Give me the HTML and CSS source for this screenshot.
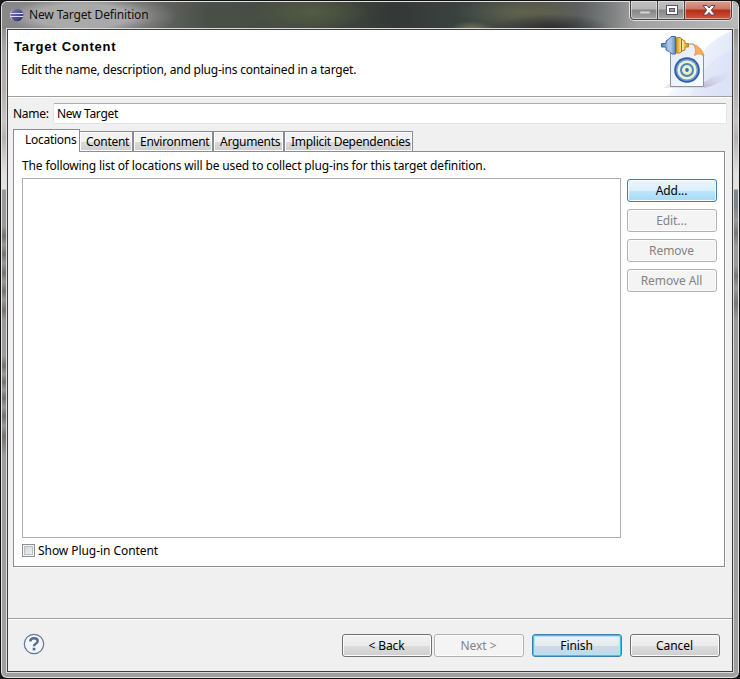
FILE: index.html
```html
<!DOCTYPE html>
<html lang="en">
<head>
<meta charset="utf-8">
<title>New Target Definition</title>
<link rel="stylesheet" href="styles.css">
</head>
<body>
<div class="window">
  <div class="titlebar">
    <svg class="app-icon" width="15" height="14" viewBox="0 0 15 14">
      <defs><linearGradient id="orb" x1="0" y1="0" x2="1" y2="1"><stop offset="0" stop-color="#8581bd"/><stop offset="1" stop-color="#2b2474"/></linearGradient></defs>
      <path d="M5 1 A6.5 6.5 0 0 0 5 13 L4 7Z" fill="#c9b9c8"/>
      <circle cx="8" cy="7" r="6.3" fill="url(#orb)"/>
      <path d="M1 5.5H14M1 8.5H14" stroke="#d7e2fa" stroke-width="1.2"/>
    </svg>
    <span class="title">New Target Definition</span>
    <div class="controls">
      <div class="control min"><svg width="28" height="18"><rect x="9.5" y="10.500" width="9" height="2" fill="#d4d4d4" stroke="#b3b3b3"/></svg></div>
      <div class="control max"><svg width="27" height="18"><rect x="8.500" y="4.500" width="11" height="9" fill="#fff" stroke="#55556a"/><rect x="11.500" y="7.500" width="5" height="3" fill="#999" stroke="#55556a"/></svg></div>
      <div class="control close"><svg width="46" height="18"><path d="M18 4.500h4l2 2.500L26 4.500h4l-3.700 4.700L30 14h-4l-2-2.600-2 2.600h-4l3.700-4.800Z" fill="#fff" stroke="#57485a"/></svg></div>
    </div>
  </div>
  <div class="client">
    <header class="banner">
      <div>
        <h1>Target Content</h1>
        <p>Edit the name, description, and plug-ins contained in a target.</p>
      </div>
      <svg class="banner-art" width="76" height="66" viewBox="0 0 76 66">
        <defs>
          <linearGradient id="wave" x1="0" y1="0" x2="1" y2=".4"><stop offset=".15" stop-color="#fff"/><stop offset="1" stop-color="#dfe6f8"/></linearGradient>
          <linearGradient id="shade" x1="0" y1="1" x2="1" y2="0"><stop offset="0" stop-color="#b5abc8" stop-opacity=".75"/><stop offset="1" stop-color="#ddd9ed" stop-opacity="0"/></linearGradient>
          <linearGradient id="page" x1="0" y1="0" x2="1" y2="1"><stop offset="0" stop-color="#dce7f8"/><stop offset="1" stop-color="#fff"/></linearGradient>
          <linearGradient id="blue" x1="0" y1="0" x2="1" y2="0"><stop offset="0" stop-color="#4f7fbd"/><stop offset=".6" stop-color="#bcd6f2"/><stop offset="1" stop-color="#5586c4"/></linearGradient>
          <linearGradient id="gold" x1="0" y1="0" x2="1" y2="0"><stop offset="0" stop-color="#d49a21"/><stop offset=".45" stop-color="#fff0a5"/><stop offset="1" stop-color="#c58b1b"/></linearGradient>
        </defs>
        <path d="M76 1Q48 12 42 32L10 66H76Z" fill="url(#wave)"/>
        <path d="M76 21Q49 28 34 66H76Z" fill="#d6dff6" opacity=".3"/>
        <path d="M48 58V52Q60 43 76 42Q67 54 48 58Z" fill="url(#shade)"/>
        <path d="M8 58H50L43 53H14Z" fill="#c8bfd0" opacity=".4"/>
        <path d="M14.500 18V56.500H47.500V26L37 14H20Z" fill="url(#page)" stroke="#82979d"/>
        <path d="M37 14Q46 17 48 26Q43 22 38.500 25.500Q41 19 37 14Z" fill="#f8ad5c" stroke="#d88a40" stroke-width=".7"/>
        <circle cx="31" cy="40" r="12.800" fill="#315ca8"/>
        <circle cx="31" cy="40" r="11" fill="#6f9bd0"/>
        <circle cx="31" cy="40" r="9.600" fill="#edf3d0"/>
        <circle cx="31" cy="40" r="6" fill="#e3edc4" stroke="#4c84bd" stroke-width="2"/>
        <circle cx="31" cy="40" r="3.300" fill="#f1f4cf"/>
        <circle cx="31" cy="40" r="1.900" fill="#3c6dad"/>
        <path d="M5.500 13.500H10V11L13 9 15 6.500H19.500V24H16L13 21.500 10 20V17H5.500Z" fill="url(#blue)" stroke="#416caa"/>
        <path d="M14 9V22" stroke="#9cbde1"/>
        <path d="M20.500 7.500H24L27 10 29 11V13.500H32.500V17H29V20L26 21 24 23H20.500Z" fill="url(#gold)" stroke="#bd841c"/>
        <path d="M25.500 9V22" stroke="#9e6b17"/>
      </svg>
    </header>
    <div class="body">
      <div class="name-row"><label for="name">Name:</label><div class="input" id="name"><span>New Target</span></div></div>
      <div class="tabs">
        <div class="tab active t-loc"><span>Locations</span></div>
        <div class="tab t-con"><span>Content</span></div>
        <div class="tab t-env"><span>Environment</span></div>
        <div class="tab t-arg"><span>Arguments</span></div>
        <div class="tab t-imp"><span>Implicit Dependencies</span></div>
      </div>
      <section class="panel">
        <p class="intro">The following list of locations will be used to collect plug-ins for this target definition.</p>
        <div class="content">
          <div class="list"></div>
          <div class="actions">
            <div class="button add"><span>Add...</span></div>
            <div class="button disabled"><span>Edit...</span></div>
            <div class="button disabled"><span>Remove</span></div>
            <div class="button disabled"><span>Remove All</span></div>
          </div>
        </div>
        <div class="check"><i class="box"></i><span>Show Plug-in Content</span></div>
      </section>
    </div>
    <footer class="footer">
      <svg class="help" width="22" height="22" viewBox="0 0 22 22"><circle cx="11" cy="11" r="9.700" fill="#f4f5f7" stroke="#637796" stroke-width="1.200"/><path d="M7.300 8.500Q7.300 5.200 11 5.200T14.700 8.200Q14.700 9.700 12.700 10.800Q11 11.700 11 13.300" fill="none" stroke="#566b8d" stroke-width="2.400"/><rect x="9.700" y="14.800" width="2.700" height="2.600" fill="#566b8d"/></svg>
      <div class="button back"><span>&lt; Back</span></div>
      <div class="button disabled next"><span>Next &gt;</span></div>
      <div class="button finish"><span>Finish</span></div>
      <div class="button cancel"><span>Cancel</span></div>
    </footer>
  </div>
</div>
</body>
</html>
```
FILE: styles.css
```css
* { box-sizing: border-box; }
body { margin: 0; background: #19191b; font: 12px/16px "Noto Sans", "Open Sans", sans-serif; color: #000; overflow: hidden; }
h1, p { margin: 0; }
span { white-space: nowrap; }
svg { display: block; }
.window {
  width: 740px; height: 679px; padding: 0 6px 6px 5px; border: 1px solid #111; border-radius: 7px;
  box-shadow: inset 0 0 0 1px #e4e4e4;
  background:
    linear-gradient(transparent 225px, #777170 235px, #999 244px, #777170 253px, #999 262px, #777170 272px, #999 281px, #777170 290px, #999 299px, #777170 309px, transparent 320px, transparent 355px, #777170 365px, #999 373px, #777170 381px, #999 389px, #777170 397px, #999 406px, #777170 415px, #999 425px, #777170 435px, transparent 455px) 0 0 / 10px 100% no-repeat,
    linear-gradient(transparent 188px, #7d8891 190px, #77828c 205px, #999 220px, #777 232px, #999 245px, #999 265px, #777 275px, #999 287px, #777 302px, transparent 320px) 100% 0 / 10px 100% no-repeat,
    linear-gradient(180deg, #777 0, #aaa 50px, #b5b0af 90px, #c9c4c4 120px, #b5b1b1 137px, #e0dedc 170px, #e6e4e2 188px, #999 189px, #a0a0a0 100%);
}
.titlebar {
  height: 27px; margin: 1px -5px 0 -4px; padding-left: 7px; display: flex; align-items: flex-start; border-radius: 6px 6px 0 0;
  background:
    radial-gradient(ellipse 95px 24px at 80px 14px, rgba(172,172,172,.95) 50%, rgba(140,140,140,.6) 76%, transparent 100%),
    radial-gradient(ellipse 60px 18px at 310px 10px, rgba(92,103,70,.6), transparent),
    radial-gradient(ellipse 60px 14px at 550px 26px, rgba(35,36,38,.8), transparent),
    radial-gradient(ellipse 70px 16px at 520px 10px, rgba(112,113,82,.6), transparent),
    radial-gradient(ellipse 22px 8px at 470px 27px, rgba(160,145,105,.6), transparent),
    linear-gradient(90deg, #858585 0, #656763 150px, #4a4f48 205px, #434a3f 320px, #343837 390px, #3b4442 470px, #50514a 540px, #5a5d5f 575px, #7e8181 610px, #a2a2a2 635px, #b9b9b9 100%);
}
.app-icon { margin-top: 6px; }
.title { margin: 5px 0 0 5px; width: 121px; color: #111; letter-spacing: -.14px; }
.controls { display: flex; margin-left: auto; margin-right: 5px; height: 20px; margin-top: -1px; border: 1px solid #e0e0e0; border-top: 0; border-radius: 0 0 5px 5px; overflow: hidden; }
.control { height: 19px; border: 0 solid #444; border-right-width: 1px; border-bottom-width: 1px; box-shadow: inset 0 0 0 1px rgba(255,255,255,.45); background: linear-gradient(#c0c0c0, #b5b5b5 45%, #858585 50%, #a5a5a5); }
.min { width: 28px; border-left-width: 1px; border-bottom-left-radius: 4px; }
.max { width: 27px; }
.close { width: 47px; border-bottom-right-radius: 4px; background: linear-gradient(#dda092 0, #cd7562 45%, #b32c18 50%, #d65440 100%); }
.client { height: 643px; margin-left: 1px; border: 1px solid #3d3d3d; box-shadow: 0 0 0 1px #ddd; background: #f0f0f0; display: flex; flex-direction: column; }
.banner { height: 67px; flex: none; background: #fff; border-bottom: 1px solid #a0a0a0; display: flex; justify-content: space-between; padding-left: 6px; }
h1 { font: bold 13px/16px "Liberation Sans", sans-serif; letter-spacing: .78px; margin-top: 9px; }
.banner p { margin: 7px 0 0 7px; letter-spacing: -.2px; }
.body { border-top: 1px solid #fff; padding: 5px 5px 0; height: 521px; }
.name-row { display: flex; align-items: center; height: 21px; letter-spacing: -.3px; }
.name-row label { width: 40px; }
.input { width: 674px; height: 21px; background: #fff; border: 1px solid #e2e3ea; border-top-color: #abadb3; border-radius: 2px; padding: 2px 3px; }
.tabs { display: flex; align-items: flex-end; height: 27px; letter-spacing: -.28px; }
.tab { height: 20px; border: 1px solid #898c95; border-bottom: 0; box-shadow: inset 0 0 0 1px #fcfcfc; background: linear-gradient(#f2f2f2 50%, #dadada 51%, #cecece); padding: 2px 0 0 6px; }
.tab.active { position: relative; height: 23px; margin-bottom: -1px; background: #fff; padding: 2px 0 0 11px; box-shadow: none; }
.t-loc { width: 67px; }
.t-con { width: 53px; border-left: 0; }
.t-env { width: 80px; }
.t-arg { width: 71px; }
.t-imp { width: 129px; }
.panel { width: 712px; height: 416px; border: 1px solid #898c95; background: #fff; padding: 6px 7px 0 8px; box-shadow: 1px 1px 0 #fafafa; }
.intro { white-space: nowrap; height: 20px; letter-spacing: -.14px; }
.content { display: flex; gap: 6px; }
.list { width: 599px; height: 360px; border: 1px solid #abadb3; }
.actions { display: grid; gap: 7px; align-content: start; padding-top: 1px; }
.button { width: 90px; height: 23px; border: 1px solid #707070; border-radius: 3px; background: linear-gradient(#f2f2f2, #ebebeb 50%, #dddddd 51%, #cfcfcf); box-shadow: inset 0 0 0 1px #fcfcfc; display: flex; align-items: center; justify-content: center; padding-right: 1px; letter-spacing: -.08px; }
.button.disabled { color: #838383; border-color: #adb2b5; background: #f4f4f4; }
.button.add { border-color: #3c7fb1; background: linear-gradient(#eaf6fd, #d9f0fc 50%, #bee6fd 51%, #a7d9f5); }
.button.finish { border-color: #3c7fb1; box-shadow: inset 0 0 0 1px #38c5f0, inset 0 0 0 2px #b8e1ef; background: linear-gradient(#f0f3f5, #e3ebef 50%, #cbdce7 51%, #c2d9e7); }
.check { display: flex; align-items: center; gap: 3px; height: 26px; letter-spacing: -.06px; }
.box { width: 13px; height: 13px; margin-bottom: 2px; border: 1px solid #8e8f8f; background: linear-gradient(135deg, #cbcfd5, #f6f6f6); box-shadow: inset 0 0 0 1px #f4f4f4, inset 0 0 0 2px #b9bdc4; }
.footer { flex: 1; border-top: 1px solid #a0a0a0; box-shadow: inset 0 1px #fff; display: flex; align-items: flex-start; padding: 15px 12px 0 15px; }
.help { margin-top: -1px; }
.back { margin-left: auto; margin-right: 2px; }
.next { margin-right: 8px; }
.finish { margin-right: 8px; }
```
